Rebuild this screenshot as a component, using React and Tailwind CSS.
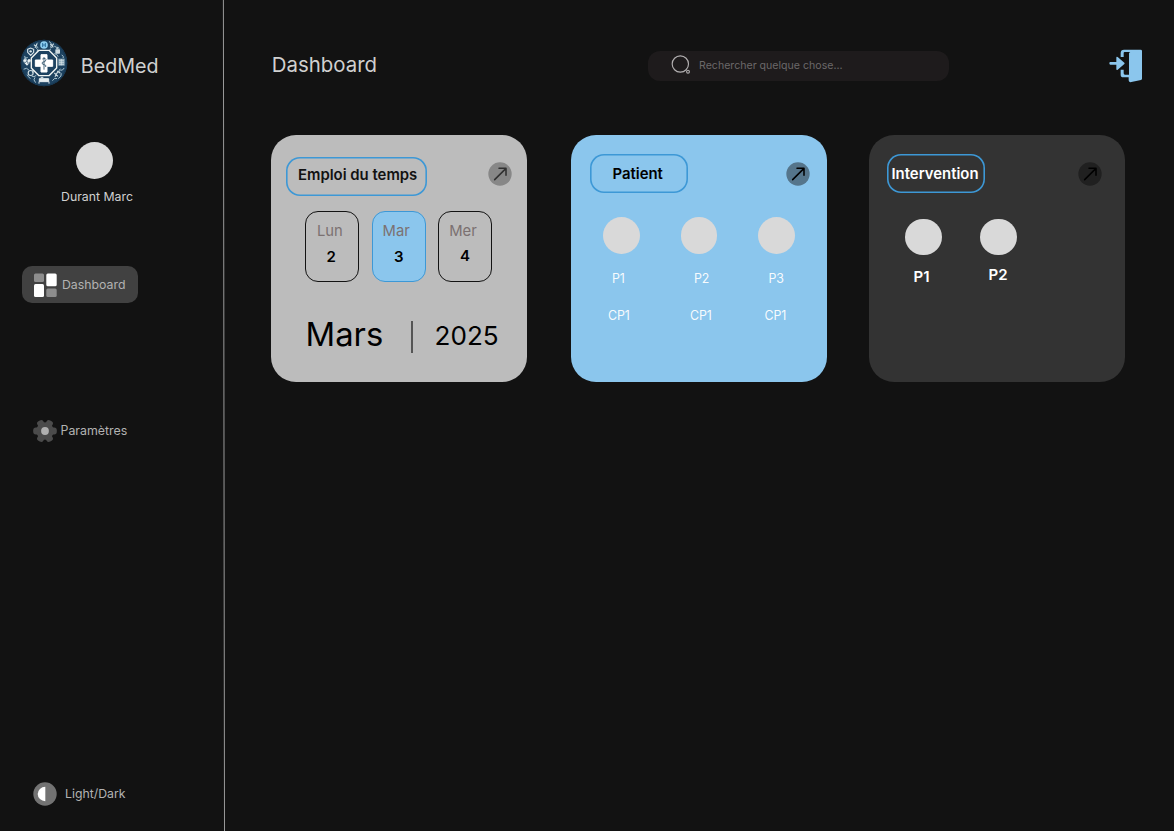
import React from "react";

function Logo() {
  return (
    <svg className="h-[48px] w-[48px] shrink-0" viewBox="0 0 144 144">
      <circle cx="72" cy="72" r="70" fill="#1d4260" />
      <circle cx="72" cy="72" r="68" fill="none" stroke="#163650" strokeWidth="3" />
      <g stroke="#a9c3cf" fill="none" strokeWidth="3" strokeLinecap="round">
        <path d="M52 12q-8 8 2 14M88 8q10 4 4 16M104 22q8 2 10 8M126 48q6 4 4 8M132 88q-4 8-10 6M120 90q-8 6 0 12M124 104q2 8-8 14M98 124q6-10 12-6M46 130q-8-8-2-14M30 118q-6-6-8-10M12 90q8-6 14 2M20 62q-6-4-6-10M14 58l8-2M50 28q6 4 2 8M92 30q-6 2-4 6M104 44q8 0 10 8M38 92q4 6 0 10M36 112q6 4 12-2" />
      </g>
      <circle cx="72" cy="18" r="11.5" fill="#8ccdf0" />
      <path d="M68 12v12M76 12v12M68 18h8" stroke="#2b6f9e" strokeWidth="3" />
      <path d="M21 80l-10-10q-4-10 5-10l5 5 5-5q9 0 5 10z" fill="#e9f1f3" />
      <path d="M11 70h7l3-5 3 9 3-4h6" fill="none" stroke="#1d4260" strokeWidth="1.8" />
      <path d="M23 31l9-4 9 4v9l-9 9-9-9z" fill="none" stroke="#dbe6ea" strokeWidth="3.4" />
      <circle cx="32" cy="37" r="3.6" fill="#dbe6ea" />
      <path d="M42 17l8 8M51 15l-6 11M91 15l9 10M101 14l-8 12" stroke="#c9d8de" strokeWidth="3.4" />
      <rect x="106" y="31" width="14" height="13" rx="2" fill="#ccdae0" />
      <path d="M109 29q4-8 9 0" stroke="#ccdae0" strokeWidth="3" fill="none" />
      <rect x="115" y="59" width="19" height="21" fill="#89a7b8" />
      <path d="M117 64h15M117 70h15M117 76h15M124 60v19" stroke="#dce7eb" strokeWidth="2" />
      <path d="M105 113l9-16M112 96l8 6M103 102l11 10" stroke="#d2dfe4" strokeWidth="3.4" />
      <circle cx="32" cy="102" r="7.5" fill="none" stroke="#d2dfe4" strokeWidth="3.4" />
      <path d="M58 119h28v9H58zM57 128v6M87 128v6M62 115h8" fill="#e4ecef" stroke="#e4ecef" strokeWidth="3" />
      <path d="M57 34h30l23 23v30l-23 23H57L34 87V57z" fill="#1d4260" stroke="#f1f5f3" strokeWidth="4.2" strokeLinejoin="round" />
      <path d="M63 47h18v16h17v19H81v17H63V82H46V63h17z" fill="#fff" stroke="#fff" strokeWidth="3" strokeLinejoin="round" />
      <path d="M72 54v38M67 60q11-5 11 2t-11 8q-3 6 5 7 8 1 5 7" fill="none" stroke="#31536c" strokeWidth="2.6" />
    </svg>
  );
}

function Gear() {
  return (
    <svg className="h-6 w-6 shrink-0" viewBox="-12 -12 24 24">
      <g fill="#4b4b4b">
        <circle r="8.8" />
        {[0, 60, 120].map((a) => (
          <rect key={a} x="-11.8" y="-3.4" width="23.6" height="6.8" rx="2.6" transform={`rotate(${a})`} />
        ))}
      </g>
      <circle r="3.9" fill="#b0b0b0" />
    </svg>
  );
}

function Arrow({ disc, stroke }) {
  return (
    <svg className="h-6 w-6 shrink-0" viewBox="0 0 72 72">
      <circle cx="36" cy="36" r="35" fill={disc} />
      <path d="M20 53L54 19M33 19h21v21" fill="none" stroke={stroke} strokeWidth="4.6" strokeLinecap="round" strokeLinejoin="round" />
    </svg>
  );
}

function Day({ name, num, box, nameCls, numCls }) {
  return (
    <div className={`h-[71px] w-[54px] rounded-[13px] border ${box}`}>
      <div className={`mt-[9px] h-5 text-[14.8px] leading-5 text-[#7b7171] ${nameCls}`}>{name}</div>
      <div className={`h-5 text-[15px] font-semibold leading-5 text-black ${numCls}`}>{num}</div>
    </div>
  );
}

const disc = "h-[36.6px] w-[36.6px] shrink-0 rounded-full bg-[#d9d9d9]";
const pill = "h-[39px] rounded-[14px] shadow-[inset_0_0_0_1.6px_#3d98d6] text-[14.9px] font-semibold leading-6";

function Patient({ name, code, cls, labels }) {
  return (
    <div className={`${cls} whitespace-nowrap text-[12.4px] leading-5 text-white/95`}>
      <div className={disc} />
      <div className={labels}>
        <div className="pl-[4px]">{name}</div>
        <div className="mt-[17px]">{code}</div>
      </div>
    </div>
  );
}

export default function App() {
  return (
    <div className="flex h-[831px] w-[1174px] overflow-hidden bg-[#121212] font-['Inter',sans-serif] font-normal text-[#d0d0d0]">
      <aside className="flex w-[222px] shrink-0 flex-col whitespace-nowrap">
        <div className="mt-[39px] flex h-12 pl-[20px]">
          <Logo />
          <span className="ml-[12.8px] mt-[14.5px] text-[19.7px] leading-6">BedMed</span>
        </div>
        <div className="ml-[61px] mt-[55px] flex w-[72px] flex-col items-center self-start">
          <div className={`${disc} mr-[5px]`} />
          <div className="mt-[8.4px] text-[12.3px] leading-5">Durant Marc</div>
        </div>
        <div className="ml-[22px] mt-[59px] flex h-[37px] w-[116px] rounded-[10px] bg-[#414141] pl-3 text-[#b2b2b2]">
          <svg className="mt-[7px] h-6 w-[23px] shrink-0" viewBox="0 0 23 24">
            <rect x="0" y="0.5" width="10" height="8.5" rx="1.5" fill="#8d8d8d" />
            <rect x="12.3" y="0.5" width="10.4" height="12.7" rx="1.5" fill="#fff" />
            <rect x="0" y="11" width="10" height="13" rx="1.5" fill="#fff" />
            <rect x="12.3" y="15.5" width="10.4" height="8.5" rx="1.5" fill="#8d8d8d" />
          </svg>
          <span className="ml-[5px] mt-[9px] text-[12.3px] leading-5">Dashboard</span>
        </div>
        <div className="ml-[33px] mt-[116px] flex text-[#b2b2b2]">
          <Gear />
          <span className="ml-[3.5px] mt-[2px] text-[12.4px] leading-5">Paramètres</span>
        </div>
        <div className="ml-[33px] mt-[339px] flex text-[#b2b2b2]">
          <svg className="h-6 w-6 shrink-0" viewBox="-12 -12 24 24">
            <circle r="11.7" fill="#737373" />
            <path d="M0.3 -7.2A7.6 7.2 0 0 0 0.3 7.2z" fill="#fff" />
          </svg>
          <span className="ml-[8px] mt-[2px] text-[12.3px] leading-5">Light/Dark</span>
        </div>
      </aside>

      <svg className="h-[831px] w-[4px] shrink-0" viewBox="0 0 4 831">
        <path d="M1.4 0L2.5 831" stroke="#9a9a9a" strokeWidth="1" />
      </svg>

      <main className="flex flex-1 flex-col pl-[45px]">
        <header className="flex h-[135px] whitespace-nowrap">
          <h1 className="mt-[52.5px] h-6 w-[377px] shrink-0 pl-[0.8px] text-[20.4px] leading-6">Dashboard</h1>
          <div className="mt-[51px] flex h-[30px] w-[301px] shrink-0 rounded-[12px] bg-[#1e1b1c] pl-[23px]">
            <svg className="mt-[3px] h-[21px] w-5 shrink-0" viewBox="93 42 60 63" fill="none" stroke="#b3b0b1">
              <circle cx="121" cy="72" r="24.5" strokeWidth="3.4" />
              <circle cx="144" cy="95" r="4.2" strokeWidth="3.4" />
            </svg>
            <span className="ml-[8px] mt-[5px] text-[10.6px] leading-5 text-[#6b6869]">Rechercher quelque chose...</span>
          </div>
          <svg className="ml-[159px] mt-[48px] h-9 w-9 shrink-0" viewBox="54 54 108 108" fill="#8bc6ed">
            <path d="M117 70q0-2 4-3l-5-1H104q-3 0-3 3v12h-9v-12q0-10 10-10h50q4 0 4 4v83q0 3-3 4l-29 6q-8 2-8-5v-9h-16q-8 0-8-8v-15h9v11q0 4 4 4h12z" />
            <path d="M61 96h18V83q0-5 4-2l20 17q2 2 0 4l-20 17q-4 3-4-2v-13H61q-3 0-3-4t3-4z" />
          </svg>
        </header>

        <div className="flex whitespace-nowrap">
          <section className="h-[246.5px] w-[256px] shrink-0 rounded-[25px] bg-[#bcbcbc] text-black">
            <div className="flex">
              <div className={`ml-[15px] mt-[22px] w-[141px] pl-[12px] pt-[5.5px] text-[#121212] ${pill}`}>Emploi du temps</div>
              <div className="ml-[61px] mt-[27px]"><Arrow disc="#878787" stroke="#303030" /></div>
            </div>
            <div className="ml-[34px] mt-[15px] flex gap-[12.6px]">
              <Day name="Lun" num="2" box="border-[#121212]" nameCls="pl-[11px]" numCls="pl-[20.5px] mt-[5.5px]" />
              <Day name="Mar" num="3" box="border-[#3d98d6] bg-[#8bc6ed]" nameCls="pl-[10px]" numCls="pl-[21.5px] mt-[5.5px]" />
              <Day name="Mer" num="4" box="border-[#121212]" nameCls="pl-[10px]" numCls="pl-[20.7px] mt-[4.5px]" />
            </div>
            <div className="ml-[34px] mt-[32px] flex">
              <span className="w-[106px] pl-[0.5px] text-[32.8px] leading-10">Mars</span>
              <span className="mt-[7px] h-8 w-[1.5px] bg-[#555]" />
              <span className="ml-[22px] mt-[2px] text-[26.1px] leading-10">2025</span>
            </div>
          </section>

          <section className="ml-[44px] h-[246.5px] w-[256px] shrink-0 rounded-[25px] bg-[#8bc6ed] text-black">
            <div className="flex">
              <div className={`ml-[19px] mt-[19px] w-[98px] pl-[22.5px] pt-[8px] ${pill}`}>Patient</div>
              <div className="ml-[98px] mt-[27px]"><Arrow disc="#55758b" stroke="#000" /></div>
            </div>
            <div className="ml-[32.4px] mt-[24px] flex">
              <Patient name="P1" code="CP1" cls="w-[77.5px]" labels="ml-[4.5px] mt-[15px]" />
              <Patient name="P2" code="CP1" cls="w-[77.5px]" labels="ml-[9px] mt-[15px]" />
              <Patient name="P3" code="CP1" cls="w-[60px]" labels="ml-[6px] mt-[15px]" />
            </div>
          </section>

          <section className="ml-[42px] h-[246.5px] w-[256px] shrink-0 rounded-[25px] bg-[#333] text-white">
            <div className="flex">
              <div className={`ml-[18px] mt-[19px] w-[98px] pl-[4.5px] pt-[8px] ${pill}`}>Intervention</div>
              <div className="ml-[93px] mt-[27px]"><Arrow disc="#202020" stroke="#000" /></div>
            </div>
            <div className="ml-[36px] mt-[25.5px] flex text-[15px] font-semibold leading-5">
              <div className="w-[75px]">
                <div className={disc} />
                <div className="ml-[8.5px] mt-[12px]">P1</div>
              </div>
              <div>
                <div className={disc} />
                <div className="ml-[8.5px] mt-[10px]">P2</div>
              </div>
            </div>
          </section>
        </div>
      </main>
    </div>
  );
}
